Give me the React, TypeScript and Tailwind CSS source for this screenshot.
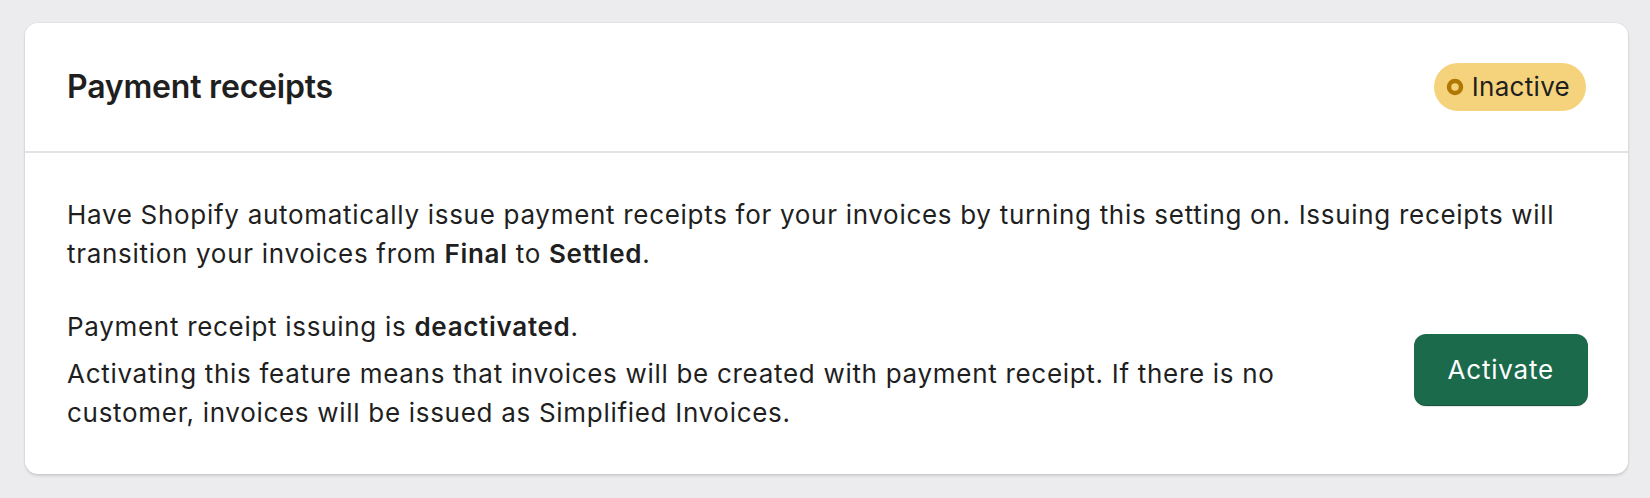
export default function App() {
  return (
    <div
      className="min-h-screen bg-[#ececef] pt-[23px] pl-[25px] pr-[22px] pb-[25px]"
      style={{ fontFamily: "Inter, 'Noto Sans', sans-serif" }}
    >
      <section className="rounded-[13px] bg-white shadow-[0_2px_3px_rgba(0,0,0,0.12),0_0_0_1px_rgba(0,0,0,0.03)] overflow-hidden">
        {/* Header */}
        <div className="flex items-center justify-between px-[42px] py-10">
          <h2 className="text-[32px] leading-[48px] font-semibold text-[#1f1f1f] tracking-[-0.2px]">
            Payment receipts
          </h2>
          <span className="flex items-center gap-2 h-12 rounded-full bg-[#f5d37c] pl-3 pr-4">
            <svg width="18" height="18" viewBox="0 0 18 18" className="shrink-0">
              <circle cx="9" cy="9" r="6" fill="none" stroke="#b07800" strokeWidth="4.5" />
            </svg>
            <span className="text-[26px] leading-none text-[#1f1f1f] tracking-[0.3px]">Inactive</span>
          </span>
        </div>

        <div className="h-[2px] bg-[#e3e3e5]" />

        {/* Body */}
        <div className="px-[42px] pt-[42px] pb-[42px] pr-10 text-[26px] leading-[39px] text-[#1f1f1f] tracking-[0.7px]">
          <p>
            Have Shopify automatically issue payment receipts for your invoices by turning this setting on. Issuing
            receipts will transition your invoices from <strong className="font-semibold">Final</strong> to{" "}
            <strong className="font-semibold">Settled</strong>.
          </p>

          <div className="mt-[34px] flex items-center justify-between gap-10">
            <div className="max-w-[1260px]">
              <p>
                Payment receipt issuing is <strong className="font-semibold">deactivated</strong>.
              </p>
              <p className="mt-2">
                Activating this feature means that invoices will be created with payment receipt. If there is no
                customer, invoices will be issued as Simplified Invoices.
              </p>
            </div>
            <button className="shrink-0 h-[72px] rounded-[12px] bg-[#1b6a4b] px-[34px] text-[26px] font-normal tracking-[0.8px] text-white shadow-[inset_0_-1px_0_rgba(0,0,0,0.2),0_1px_1px_rgba(0,0,0,0.1)]">
              Activate
            </button>
          </div>
        </div>
      </section>
    </div>
  );
}
